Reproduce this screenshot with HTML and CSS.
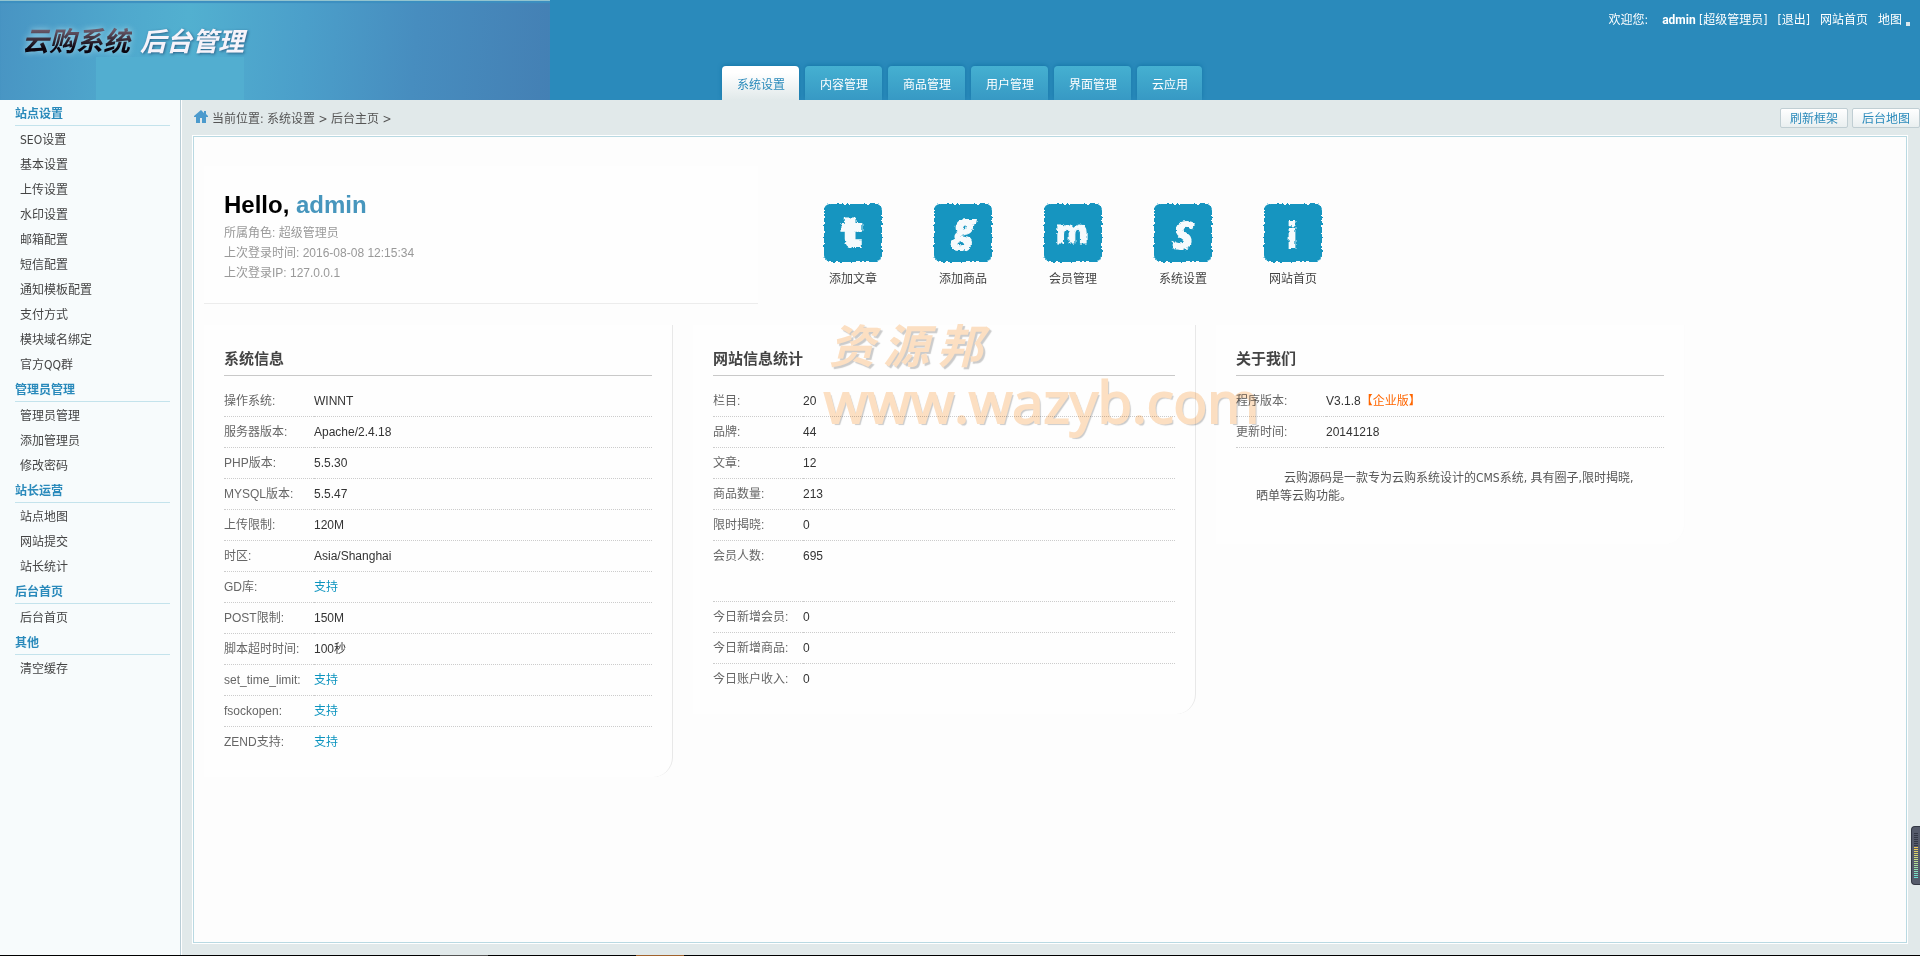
FILE: index.html
```
<!DOCTYPE html>
<html lang="zh-CN">
<head>
    <meta charset="UTF-8">
    <meta name="viewport" content="width=device-width, initial-scale=1.0">
    <title>云购系统 后台管理</title>
    <link rel="stylesheet" href="styles.css">
</head>
<body>
<header class="header">
    <div class="logo">
        <div class="logo-block"></div>
        <h1><span class="logo-dark">云购系统</span><span class="logo-light">后台管理</span></h1>
    </div>
    <nav class="tabs">
        <a href="#" class="active">系统设置</a>
        <a href="#">内容管理</a>
        <a href="#">商品管理</a>
        <a href="#">用户管理</a>
        <a href="#">界面管理</a>
        <a href="#">云应用</a>
    </nav>
    <div class="user-bar">
        <span class="welcome-word">欢迎您:</span>
        <span class="user-role"><b>admin</b> [超级管理员]</span>
        <a href="#">[退出]</a>
        <a href="#">网站首页</a>
        <a href="#" class="map-link">地图</a>
        <i class="dot"></i>
    </div>
</header>

<div class="body">
    <aside class="sidebar">
        <h3>站点设置</h3>
        <ul>
            <li><a href="#">SEO设置</a></li>
            <li><a href="#">基本设置</a></li>
            <li><a href="#">上传设置</a></li>
            <li><a href="#">水印设置</a></li>
            <li><a href="#">邮箱配置</a></li>
            <li><a href="#">短信配置</a></li>
            <li><a href="#">通知模板配置</a></li>
            <li><a href="#">支付方式</a></li>
            <li><a href="#">模块域名绑定</a></li>
            <li><a href="#">官方QQ群</a></li>
        </ul>
        <h3>管理员管理</h3>
        <ul>
            <li><a href="#">管理员管理</a></li>
            <li><a href="#">添加管理员</a></li>
            <li><a href="#">修改密码</a></li>
        </ul>
        <h3>站长运营</h3>
        <ul>
            <li><a href="#">站点地图</a></li>
            <li><a href="#">网站提交</a></li>
            <li><a href="#">站长统计</a></li>
        </ul>
        <h3>后台首页</h3>
        <ul>
            <li><a href="#">后台首页</a></li>
        </ul>
        <h3>其他</h3>
        <ul>
            <li><a href="#">清空缓存</a></li>
        </ul>
    </aside>

    <main class="main">
        <div class="toolbar">
            <svg class="home" width="14" height="13" viewBox="0 0 14 13"><path d="M7 0 0 6v1h2v6h4V8h2v5h4V7h2V6l-2-2V1h-2v2z" fill="#4c9bcd"/></svg>
            <div class="crumbs">当前位置: 系统设置 &gt; 后台主页 &gt;</div>
            <button type="button">刷新框架</button>
            <button type="button">后台地图</button>
        </div>

        <div class="frame">
            <section class="top-row">
                <div class="hello">
                    <h2>Hello, <span>admin</span></h2>
                    <p>所属角色: 超级管理员</p>
                    <p>上次登录时间: 2016-08-08 12:15:34</p>
                    <p>上次登录IP: 127.0.0.1</p>
                </div>
                <div class="quick">
                    <a href="#">
                        <svg width="60" height="60" viewBox="0 0 60 60">
                            <defs>
                                <filter id="rough" x="-5%" y="-5%" width="110%" height="110%">
                                    <feTurbulence type="fractalNoise" baseFrequency="0.3" numOctaves="2" seed="4"/>
                                    <feDisplacementMap in="SourceGraphic" scale="4" xChannelSelector="R" yChannelSelector="G"/>
                                </filter>
                            </defs>
                            <g filter="url(#rough)"><rect x="1" y="1" width="58" height="58" rx="6"/><text class="heavy" x="29" y="43">t</text></g>
                        </svg>
                        <span>添加文章</span>
                    </a>
                    <a href="#">
                        <svg width="60" height="60" viewBox="0 0 60 60"><g filter="url(#rough)"><rect x="1" y="1" width="58" height="58" rx="6"/><text class="slant" x="31" y="38">g</text></g></svg>
                        <span>添加商品</span>
                    </a>
                    <a href="#">
                        <svg width="60" height="60" viewBox="0 0 60 60"><g filter="url(#rough)"><rect x="1" y="1" width="58" height="58" rx="6"/><text class="wide" x="29" y="40">m</text></g></svg>
                        <span>会员管理</span>
                    </a>
                    <a href="#">
                        <svg width="60" height="60" viewBox="0 0 60 60"><g filter="url(#rough)"><rect x="1" y="1" width="58" height="58" rx="6"/><text class="slant" x="30" y="46">S</text></g></svg>
                        <span>系统设置</span>
                    </a>
                    <a href="#">
                        <svg width="60" height="60" viewBox="0 0 60 60"><g filter="url(#rough)"><rect x="1" y="1" width="58" height="58" rx="6"/><text class="plain" x="29" y="46">i</text></g></svg>
                        <span>网站首页</span>
                    </a>
                </div>
            </section>

            <section class="columns">
                <div class="box">
                    <h4>系统信息</h4>
                    <table>
                        <tr><th>操作系统:</th><td>WINNT</td></tr>
                        <tr><th>服务器版本:</th><td>Apache/2.4.18</td></tr>
                        <tr><th>PHP版本:</th><td>5.5.30</td></tr>
                        <tr><th>MYSQL版本:</th><td>5.5.47</td></tr>
                        <tr><th>上传限制:</th><td>120M</td></tr>
                        <tr><th>时区:</th><td>Asia/Shanghai</td></tr>
                        <tr><th>GD库:</th><td class="ok">支持</td></tr>
                        <tr><th>POST限制:</th><td>150M</td></tr>
                        <tr><th>脚本超时时间:</th><td>100秒</td></tr>
                        <tr><th>set_time_limit:</th><td class="ok">支持</td></tr>
                        <tr><th>fsockopen:</th><td class="ok">支持</td></tr>
                        <tr class="no-line"><th>ZEND支持:</th><td class="ok">支持</td></tr>
                    </table>
                </div>

                <div class="box">
                    <h4>网站信息统计</h4>
                    <table>
                        <tr><th>栏目:</th><td>20</td></tr>
                        <tr><th>品牌:</th><td>44</td></tr>
                        <tr><th>文章:</th><td>12</td></tr>
                        <tr><th>商品数量:</th><td>213</td></tr>
                        <tr><th>限时揭晓:</th><td>0</td></tr>
                        <tr class="no-line"><th>会员人数:</th><td>695</td></tr>
                        <tr><th></th><td></td></tr>
                        <tr><th>今日新增会员:</th><td>0</td></tr>
                        <tr><th>今日新增商品:</th><td>0</td></tr>
                        <tr class="no-line"><th>今日账户收入:</th><td>0</td></tr>
                    </table>
                </div>

                <div class="box about">
                    <h4>关于我们</h4>
                    <table>
                        <tr><th>程序版本:</th><td>V3.1.8<span class="edition">【企业版】</span></td></tr>
                        <tr><th>更新时间:</th><td>20141218</td></tr>
                    </table>
                    <p>云购源码是一款专为云购系统设计的CMS系统, 具有圈子,限时揭晓,晒单等云购功能。</p>
                </div>

                <div class="watermark">
                    <div class="mark-name"><span>资</span><span>源</span><span>邦</span></div>
                    <div class="mark-url">www.wazyb.com</div>
                </div>
            </section>
        </div>
    </main>
</div>

<footer class="strip"></footer>

<div class="meter"><div class="meter-off"></div><div class="meter-on"></div></div>
</body>
</html>
```
FILE: styles.css
```
* {
    box-sizing: border-box;
    margin: 0;
    padding: 0;
}
body {
    display: flex;
    flex-direction: column;
    min-height: 100vh;
    background: #e1e9ea;
    color: #444;
    font: 12px/20px "DejaVu Sans Condensed", "Noto Sans CJK SC", sans-serif;
}
a {
    color: inherit;
    text-decoration: none;
}
ul {
    list-style: none;
}

/* header */
.header {
    display: flex;
    height: 100px;
    background: #2a8abb;
    color: #fff;
}
.logo {
    position: relative;
    flex: 0 0 550px;
    border-top: 1px solid #93c4cf;
    background: linear-gradient(95deg, #4894c3 0%, #4fa8cd 22%, #52b0d0 34%, #4b9fca 55%, #478dbf 75%, #4480b4 100%);
    box-shadow: inset 0 2px 1px #3c8fc0;
}
.logo h1 {
    position: relative;
    display: flex;
    gap: 8px;
    padding: 19px 0 0 22px;
    font-size: 27px;
    line-height: 40px;
    font-style: italic;
    font-family: "Noto Sans CJK SC", sans-serif;
}
.logo-dark {
    padding-right: 2px;
    background: linear-gradient(#6a5a6a 25%, #0c0610 70%);
    -webkit-background-clip: text;
    background-clip: text;
    color: transparent;
    filter: drop-shadow(0 0 3px rgba(190, 235, 245, 0.8));
}
.logo-light {
    color: #f6f3fa;
    font-size: 26px;
    text-shadow: 1px 1px 3px #2b5f86;
}
.logo-block {
    position: absolute;
    left: 96px;
    bottom: 0;
    width: 148px;
    height: 43px;
    background: #52aed0;
}
.tabs {
    display: flex;
    align-items: flex-end;
    gap: 6px;
    margin-left: 172px;
}
.tabs a {
    height: 34px;
    padding: 0 14px 0 15px;
    line-height: 38px;
    border-radius: 4px 4px 0 0;
    background: linear-gradient(#45b0d1, #3799c4);
    box-shadow: 0 -1px 4px #1677a8;
}
.tabs .active {
    background: linear-gradient(#fff 20%, #e1e9ea);
    color: #2a8abb;
}
.user-bar {
    display: flex;
    gap: 10px;
    margin-left: auto;
    padding: 10px 10px 0 0;
}
.user-bar b {
    font-family: Roboto, sans-serif;
}
.welcome-word {
    margin-right: 4px;
}
.dot {
    width: 4px;
    height: 4px;
    margin: 12px 0 0 -6px;
    background: #dce9ee;
}

/* sidebar */
.body {
    display: flex;
    flex: 1;
    background: #e1e9ea;
}
.sidebar {
    flex: 0 0 182px;
    padding: 0 11px 0 15px;
    border-right: 1px solid #fff;
    background: #f7fbfc;
    box-shadow: inset -1px 0 #b9cdd6;
}
.sidebar h3 {
    height: 26px;
    border-bottom: 1px solid #c4e3ec;
    font-size: 12px;
    line-height: 28px;
    color: #2a8abb;
}
.sidebar li {
    height: 25px;
    padding-left: 5px;
    line-height: 28px;
}

/* main */
.main {
    display: flex;
    flex: 1;
    flex-direction: column;
    padding: 0 12px 11px 10px;
}
.toolbar {
    display: flex;
    align-items: center;
    gap: 4px;
    height: 35px;
    margin-right: -12px;
    padding-left: 2px;
    color: #555;
}
.home {
    margin-bottom: 2px;
}
.crumbs {
    flex: 1;
    padding-top: 2px;
}
.toolbar button {
    width: 68px;
    height: 20px;
    padding-top: 1px;
    border: 1px solid #c0ced3;
    border-radius: 2px;
    background: linear-gradient(#fff, #e9eff0);
    color: #2a8abb;
    font: inherit;
    line-height: 18px;
}
.frame {
    flex: 1;
    padding: 29px 0 29px 10px;
    border: 1px solid #b9d9e2;
    outline: 1px solid #fff;
    margin: 1px;
    background: #fdfdfd;
    font-family: "Liberation Sans", "Noto Sans CJK SC", sans-serif;
}
.top-row {
    display: flex;
}
.hello {
    width: 554px;
    padding: 21px 20px 20px;
    border-bottom: 1px solid #ececec;
    background: #fefefe;
    color: #999;
}
.hello h2 {
    font-size: 24px;
    line-height: 36px;
    color: #000;
}
.hello h2 span {
    color: #4796bd;
}
.quick {
    display: flex;
    padding: 37px 0 0 40px;
}
.quick a {
    display: flex;
    flex-direction: column;
    align-items: center;
    gap: 6px;
    width: 110px;
}
.quick rect {
    fill: #1295c0;
}
.quick text {
    fill: #f6fafc;
    stroke: #f6fafc;
    stroke-width: 2px;
    font-family: "DejaVu Sans", sans-serif;
    font-size: 38px;
    font-weight: 700;
    text-anchor: middle;
}
.quick .heavy {
    stroke-width: 4px;
}
.quick .wide {
    font-size: 32px;
    stroke-width: 1px;
}
.quick .plain {
    stroke: none;
}
.quick .slant {
    font-family: "Open Sans", sans-serif;
    font-style: italic;
}

/* info columns */
.columns {
    position: relative;
    display: grid;
    grid-template-columns: 469fr 503fr 469fr;
    align-items: start;
    gap: 20px;
    margin: 21px 221px 0 0;
}
.box {
    padding: 20px;
    border-right: 1px solid #e8e8e8;
    border-radius: 0 0 20px 0;
    background: #fefefe;
}
.about {
    border-color: #fcfcfc;
}
.box h4 {
    height: 31px;
    margin-bottom: 10px;
    border-bottom: 1px solid #c9c9c9;
    font-size: 15px;
    line-height: 28px;
}
.box table {
    width: 100%;
    border-spacing: 0;
}
.box th,
.box td {
    height: 31px;
    border-bottom: 1px dotted #ccc;
    text-align: left;
}
.box th {
    width: 90px;
    font-weight: 400;
    color: #666;
}
.box td {
    color: #333;
}
.box .no-line th,
.box .no-line td {
    height: 30px;
    border-bottom: 0;
}
.box .ok {
    color: #0c94bf;
}
.edition {
    color: #f60;
}
.about p {
    padding: 21px 20px 19px;
    line-height: 18px;
    text-indent: 28px;
    color: #555;
    font-family: "DejaVu Sans Condensed", "Noto Sans CJK SC", sans-serif;
}

.watermark {
    position: absolute;
    top: -10px;
    left: 620px;
    color: #fde0c3;
    text-shadow: 2px 2px 1px #ccc;
    mix-blend-mode: multiply;
    pointer-events: none;
}
.mark-name {
    display: flex;
    gap: 8px;
    padding-left: 5px;
    font: italic 700 46px/56px "Noto Sans CJK SC", sans-serif;
}
.mark-url {
    font: 400 56px/60px "Open Sans", sans-serif;
    -webkit-text-stroke: 2px #fde0c3;
}

/* bottom strip and level meter */
.strip {
    height: 1px;
    background: linear-gradient(90deg, #000 440px, #555 440px, #555 488px, #000 488px, #000 636px, #a0622c 636px, #a0622c 684px, #000 684px);
}
.meter {
    position: fixed;
    right: 0;
    bottom: 71px;
    width: 9px;
    height: 59px;
    padding: 6px 1px 0 2px;
    border: 1px solid #333845;
    border-right: 0;
    border-radius: 4px 0 0 4px;
    background: #555b6b;
}
.meter-off {
    width: 4px;
    height: 14px;
    background: repeating-linear-gradient(#333845 0 1px, transparent 1px 2px);
}
.meter-on {
    width: 4px;
    height: 32px;
    background: repeating-linear-gradient(transparent 0 1px, #555b6b 1px 2px), linear-gradient(#f0c850, #c5dd85 40%, #5fe0d8);
}
```
